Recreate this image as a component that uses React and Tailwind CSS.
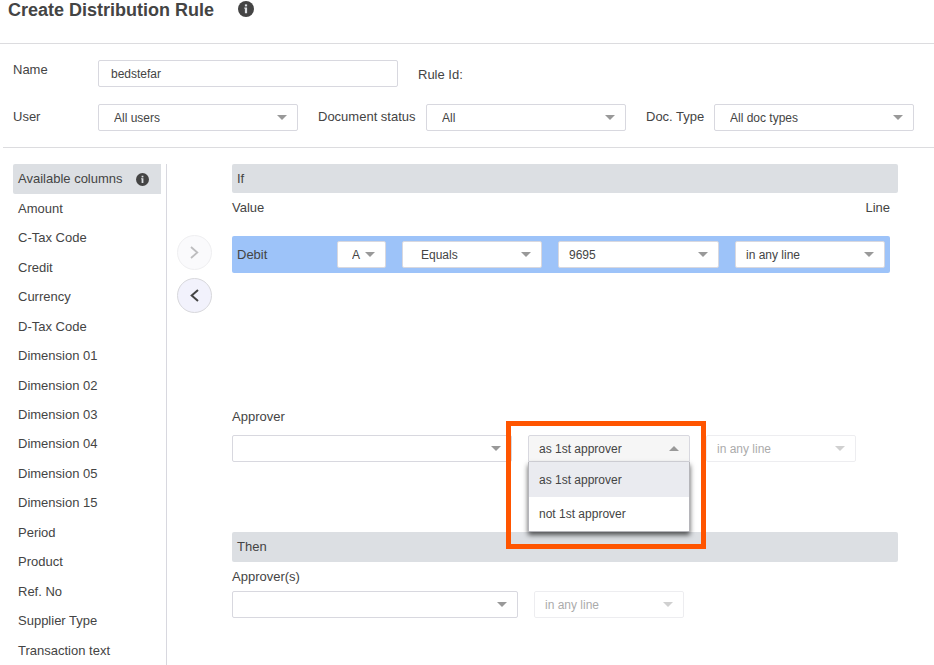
import { useState } from "react";
import clsx from "clsx";

const COLUMNS = [
  "Amount",
  "C-Tax Code",
  "Credit",
  "Currency",
  "D-Tax Code",
  "Dimension 01",
  "Dimension 02",
  "Dimension 03",
  "Dimension 04",
  "Dimension 05",
  "Dimension 15",
  "Period",
  "Product",
  "Ref. No",
  "Supplier Type",
  "Transaction text",
];

const POSITIONS = ["as 1st approver", "not 1st approver"];

function InfoIcon({ className }) {
  return (
    <svg viewBox="0 0 16 16" className={className} aria-hidden="true">
      <circle cx="8" cy="8" r="8" fill="#444" />
      <rect x="6.9" y="3.4" width="2.2" height="2" fill="#dcdfe3" />
      <path d="M6.3 6.6h2.8v5.6H6.9V7.8h-.6z" fill="#dcdfe3" />
    </svg>
  );
}

function Caret({ up }) {
  return (
    <svg
      viewBox="0 0 10 5"
      className="pointer-events-none absolute right-[11px] top-[11px] h-[5px] w-[10px]"
      aria-hidden="true"
    >
      <path d={up ? "M0 5 5 0l5 5z" : "M0 0h10L5 5z"} fill="#999" />
    </svg>
  );
}

function Select({ id, label, options = [""], disabled, className, pad = "pl-[10px]" }) {
  return (
    <div className={clsx("relative", disabled && "opacity-45", className)}>
      <select
        id={id}
        aria-label={label}
        disabled={disabled}
        className={clsx(
          "block h-[27px] w-full appearance-none rounded-[2px] border border-[#d8d8df] bg-white pt-px text-[12px] text-[#444]",
          pad
        )}
      >
        {options.map(o => (
          <option key={o}>{o}</option>
        ))}
      </select>
      <Caret />
    </div>
  );
}

// Select with its own option list, opened below the field
function PositionSelect() {
  const [open, setOpen]   = useState(true);
  const [value, setValue] = useState(POSITIONS[0]);

  return (
    <div className="relative w-[162px]">
      <select
        aria-label="Approver position"
        value={value}
        onChange={e => setValue(e.target.value)}
        onMouseDown={e => {
          e.preventDefault();
          setOpen(!open);
        }}
        className="block h-[27px] w-full appearance-none rounded-t-[2px] border border-[#d8d8df] bg-[#f6f6f6] pl-[10px] pt-px text-[12px] text-[#444]"
      >
        {POSITIONS.map(p => (
          <option key={p}>{p}</option>
        ))}
      </select>
      <Caret up={open} />
      {open && (
        <ul
          role="listbox"
          aria-label="Approver position options"
          className="absolute inset-x-0 top-[27px] z-10 border border-t-0 border-[#b5b5ba] bg-white shadow-[0_3px_5px_rgba(0,0,0,0.65)]"
        >
          {POSITIONS.map(p => (
            <li
              key={p}
              role="option"
              aria-selected={p === value}
              onClick={() => {
                setValue(p);
                setOpen(false);
              }}
              className={clsx(
                "flex h-[34px] items-center pl-[10px] text-[12px] first:h-[35px]",
                p === value && "bg-[#eaebf0]"
              )}
            >
              {p}
            </li>
          ))}
        </ul>
      )}
      <div className="pointer-events-none absolute -left-[22px] -top-[14px] z-20 h-[128px] w-[200px] border-5 border-[#ff5500]" />
    </div>
  );
}

function Filters() {
  return (
    <div className="ml-[3px] border-b border-[#dcdcdf] pb-4 pl-[10px] pr-5 pt-4">
      <div className="flex items-start">
        <label htmlFor="name" className="w-[85px] pt-px leading-[18px]">Name</label>
        <input
          id="name"
          defaultValue="bedstefar"
          className="h-[27px] w-[300px] rounded-[2px] border border-[#d8d8df] bg-white pl-3 text-[12px] text-[#444]"
        />
        <span className="pl-5 pt-[6px] leading-[18px]">Rule Id:</span>
      </div>
      <div className="mt-[17px] flex items-start">
        <label htmlFor="user" className="w-[85px] pt-[4px] leading-[18px]">User</label>
        <Select id="user" options={["All users"]} pad="pl-[15px]" className="flex-1" />
        <label htmlFor="status" className="w-32 whitespace-nowrap pl-5 pt-[4px] leading-[18px]">Document status</label>
        <Select id="status" options={["All"]} pad="pl-[15px]" className="flex-1" />
        <label htmlFor="type" className="w-[88px] whitespace-nowrap pl-5 pt-[4px] leading-[18px]">Doc. Type</label>
        <Select id="type" options={["All doc types"]} pad="pl-[15px]" className="flex-1" />
      </div>
    </div>
  );
}

function Sidebar() {
  return (
    <aside className="flex w-[167px] flex-col border-r border-[#d8d8df] pl-[13px] pr-[5px]">
      <h2 className="flex h-[30px] items-center justify-between rounded-l-[2px] bg-[#dcdfe3] pl-[5px] pr-3">
        Available columns
        <InfoIcon className="size-[13px]" />
      </h2>
      <ul className="flex flex-1 flex-col">
        {COLUMNS.map(c => (
          <li key={c} className="flex flex-1 items-center pl-[5px]">{c}</li>
        ))}
      </ul>
    </aside>
  );
}

function MoveButtons() {
  return (
    <div className="flex flex-col gap-2 px-[10px] pt-[71px]">
      <button
        disabled
        aria-label="Add column"
        className="flex size-[35px] items-center justify-center rounded-full border border-[#efeff1] bg-[#fafafc]"
      >
        <svg viewBox="0 0 9 13" className="h-[13px] w-[9px]" fill="none" stroke="#bdbdbf" strokeWidth="1.8">
          <path d="M1 1l6.3 5.5L1 12" />
        </svg>
      </button>
      <button
        aria-label="Remove column"
        className="flex size-[35px] items-center justify-center rounded-full border border-[#d8d8dc] bg-[#f2f2fc]"
      >
        <svg viewBox="0 0 9 13" className="h-[13px] w-[9px]" fill="none" stroke="#444" strokeWidth="2">
          <path d="M8 1 1.7 6.5 8 12" />
        </svg>
      </button>
    </div>
  );
}

function RuleEditor() {
  return (
    <main className="flex-1 pl-[10px] pr-9">
      <h2 className="flex h-[29px] items-center rounded-[2px] bg-[#dcdfe3] pl-[5px]">If</h2>
      <div className="flex h-[29px] items-center justify-between pr-2">
        <span>Value</span>
        <span>Line</span>
      </div>

      <div className="mr-2 mt-[14px] flex h-[37px] items-center gap-4 rounded-[2px] bg-[#9dc3f9] pl-[5px] pr-[5px]">
        <span className="flex-1">Debit</span>
        <Select label="Debit type" options={["A"]} pad="pl-[14px]" className="w-[49px]" />
        <Select label="Operator" options={["Equals"]} pad="pl-[18px]" className="w-[140px]" />
        <Select label="Account" options={["9695"]} className="w-[161px]" />
        <Select label="Line" options={["in any line"]} className="w-[150px]" />
      </div>

      <h3 className="mt-[135px] leading-[18px]">Approver</h3>
      <div className="mt-[9px] flex gap-4">
        <Select label="Approver" className="w-[280px]" />
        <PositionSelect />
        <Select label="Approver line" options={["in any line"]} disabled className="w-[150px]" />
      </div>

      <h2 className="mt-[70px] flex h-[30px] items-center rounded-[2px] bg-[#dcdfe3] pl-[5px]">Then</h2>
      <h3 className="flex h-[29px] items-center">Approver(s)</h3>
      <div className="flex gap-4">
        <Select label="Approver(s)" className="w-[286px]" />
        <Select label="Approver(s) line" options={["in any line"]} disabled className="w-[150px]" />
      </div>
    </main>
  );
}

export default function App() {
  return (
    <div className="flex min-h-screen flex-col bg-white font-['Liberation_Sans',Arial,sans-serif] text-[13px] text-[#444]">
      <header className="flex h-11 items-start border-b border-[#dcdcdf] pl-2">
        <h1 className="text-[18px] font-bold leading-5">Create Distribution Rule</h1>
        <InfoIcon className="ml-6 mt-px size-4" />
      </header>
      <Filters />
      <div className="flex flex-1 pt-4">
        <Sidebar />
        <MoveButtons />
        <RuleEditor />
      </div>
    </div>
  );
}
